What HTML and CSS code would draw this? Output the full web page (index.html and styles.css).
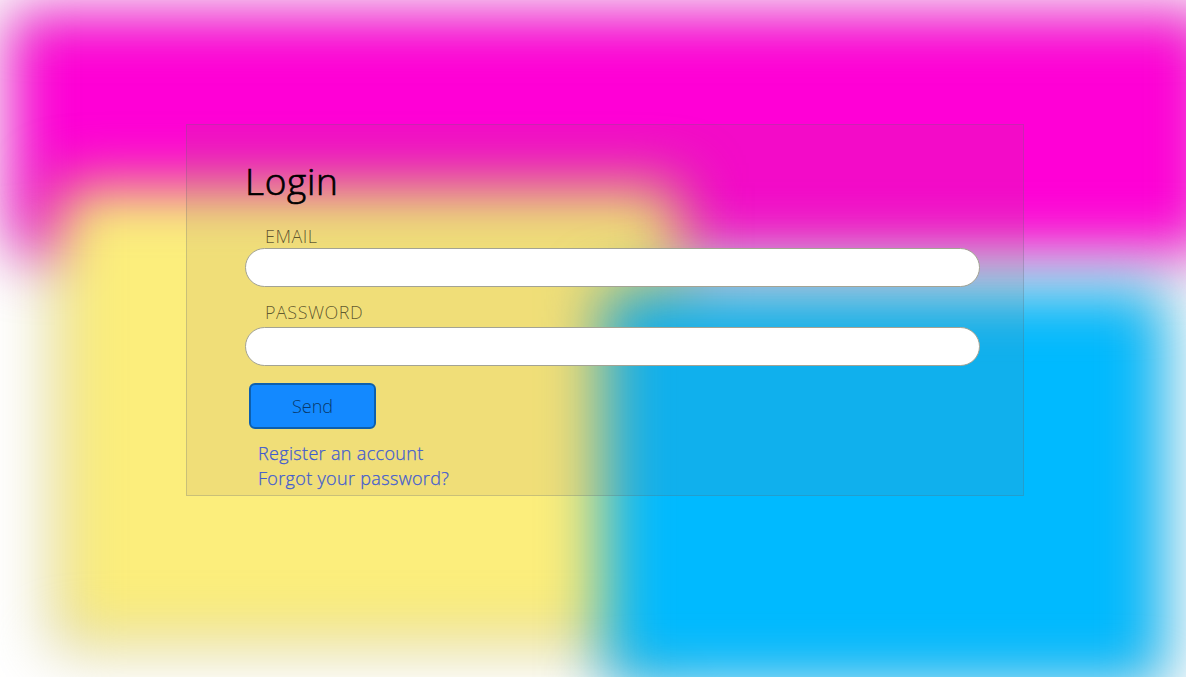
FILE: index.html
```
<!DOCTYPE html>
<html lang="en">
<head>
<meta charset="utf-8">
<title>Login</title>
<link rel="stylesheet" href="styles.css">
</head>
<body>
<div class="blob pink"></div>
<div class="blob yellow"></div>
<div class="blob blue"></div>
<main class="panel">
  <h1 class="title">Login</h1>
  <form class="form">
    <label class="label" for="email">EMAIL</label>
    <input class="field" id="email" type="email">
    <label class="label second" for="password">PASSWORD</label>
    <input class="field" id="password" type="password">
    <button class="send" type="button">Send</button>
  </form>
  <nav class="links">
    <a class="link register" href="#">Register an account</a>
    <a class="link forgot" href="#">Forgot your password?</a>
  </nav>
</main>
</body>
</html>
```
FILE: styles.css
```
* { box-sizing: border-box; }
body {
  margin: 0;
  height: 677px;
  padding: 124px 162px 0 186px;
  background: #fff;
  overflow: hidden;
  position: relative;
  font-family: "Open Sans", "Noto Sans", sans-serif;
  font-weight: 300;
}
.blob { position: absolute; filter: blur(30px); border: 4px solid #333; }
.pink { left: 8px; top: 11px; width: 1208px; height: 243px; background: #ff00d6; }
.yellow { left: 55px; top: 183px; width: 628px; height: 462px; background: #fcee7c; }
.blue { left: 604px; top: 289px; width: 562px; height: 397px; background: #00baff; }
.panel {
  position: relative;
  height: 372px;
  padding: 30px 43px 0 58px;
  background: rgba(148, 100, 90, .11);
  border: 1px solid rgba(90, 110, 120, .26);
}
.title {
  margin: 0;
  font-size: 37px;
  line-height: 52px;
  font-weight: 300;
  letter-spacing: .7px;
  -webkit-text-stroke: .7px #000;
  color: #000;
}
.form { display: flex; flex-direction: column; align-items: flex-start; padding-top: 17px; }
.label {
  padding-left: 20px;
  font-size: 18px;
  line-height: 24px;
  height: 24px;
  letter-spacing: .5px;
  color: rgba(0, 0, 0, .62);
}
.second { margin-top: 13px; height: 27px; line-height: 24px; }
.field {
  width: 735px;
  height: 39px;
  padding: 0 20px;
  border: 1px solid #a3a394;
  border-radius: 20px;
  background: #fff;
  outline: 0;
}
.send {
  width: 127px;
  height: 46px;
  margin: 16.5px 0 0 4px;
  padding: 0;
  border: 2px solid #0c5fae;
  border-radius: 6px;
  background: #1389ff;
  font: 300 18px "Open Sans", sans-serif;
  color: #08386b;
}
.links { display: flex; flex-direction: column; padding: 12.5px 0 0 13px; }
.link {
  font-size: 18px;
  line-height: 25px;
  letter-spacing: .33px;
  -webkit-text-stroke: .25px #3f5bd0;
  color: #3f5bd0;
  text-decoration: none;
}
```
